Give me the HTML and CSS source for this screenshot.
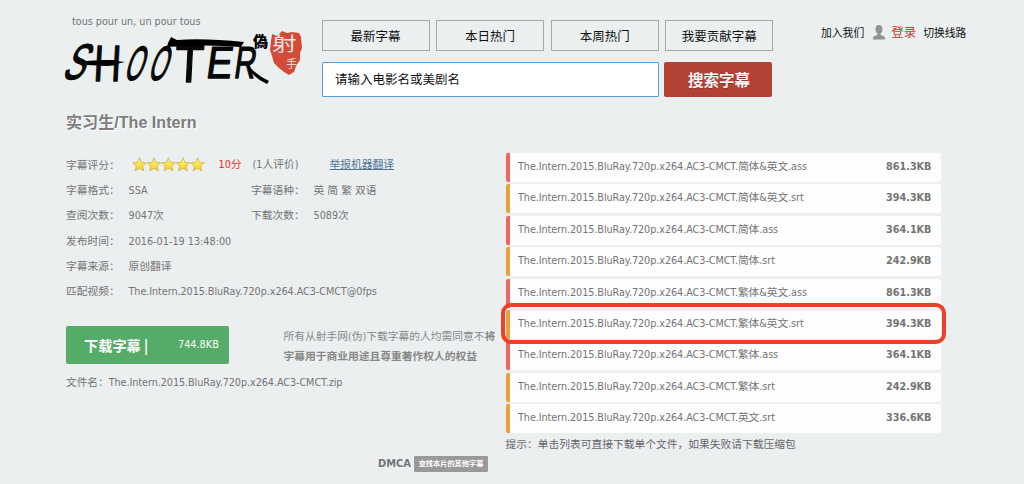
FILE: index.html
```html
<!DOCTYPE html>
<html lang="zh-CN">
<head>
<meta charset="utf-8">
<title>实习生/The Intern</title>
<link rel="stylesheet" href="styles.css">
</head>
<body>
<header class="header">
  <div class="brand">
    <p class="tagline">tous pour un, un pour tous</p>
    <svg class="logo" width="246" height="62" viewBox="0 0 246 62" role="img" aria-label="SHOOTER">
      <g class="brush">
        <text transform="translate(1 49) skewX(-24) scale(.64 1)" font-size="50">S</text>
        <text transform="translate(33 51) skewX(-3) scale(.74 1)" font-size="51">H</text>
        <text transform="translate(63 50) skewX(-18) scale(.48 1)" font-size="48">O</text>
        <text transform="translate(87 50) skewX(-18) scale(.48 1)" font-size="48">O</text>
        <text transform="translate(114 52) skewX(-3) scale(.9 1)" font-size="53">T</text>
        <text transform="translate(145 48) skewX(-8) scale(.86 1)" font-size="45">E</text>
        <text transform="translate(173 48) skewX(-8) scale(.66 1)" font-size="45">R</text>
      </g>
      <path d="M108 13 111 7 117 10 Q145 8 184 12L181 17 Q146 14 107 17Z"/>
      <path d="M26 31 Q46 29 65 32L48 36 27 35Z"/>
      <path d="M187 34Q196 45 209 51L207 54Q195 49 187 37Z"/>
      <text class="fake" x="193" y="17" font-size="15">偽</text>
      <path class="seal" d="M212 4 217 6 222 1 227 3 232 2 239 3 241 7 242 18 240 23 240 30 236 36 234 42 229 45 224 42 219 38 214 33 212 26 210 20 211 11Z"/>
      <text class="seal-text" transform="translate(212 21) scale(1.300 1)" font-size="19">射</text>
      <text class="seal-text" x="226" y="38" font-size="11">手</text>
    </svg>
  </div>
  <div class="center">
    <nav class="nav"><a>最新字幕</a><a>本日热门</a><a>本周热门</a><a>我要贡献字幕</a></nav>
    <form class="search"><div class="field">请输入电影名或美剧名</div><button type="button">搜索字幕</button></form>
  </div>
  <div class="user">
    <span>加入我们</span>
    <svg width="12" height="15" viewBox="0 0 12 15"><path d="M6 0C3.500 0 2.500 1.800 2.500 4c0 2 .7 3.700 1.900 4.600v1.300L1 11.300Q0 11.800 0 13v1.500h12V13q0-1.200-1-1.700L7.600 9.900V8.600C8.800 7.700 9.500 6 9.500 4 9.500 1.800 8.500 0 6 0Z"/></svg>
    <span class="login">登录</span>
    <span>切换线路</span>
  </div>
</header>
<h1 class="title">实习生/The Intern</h1>
<main class="main">
  <section class="info">
    <svg class="defs" width="0" height="0"><defs>
      <linearGradient id="gold" x1="0" y1="0" x2="0" y2="1"><stop offset="0" stop-color="#fff98a"/><stop offset="1" stop-color="#f2cf19"/></linearGradient>
      <path id="star" d="M7.500.8 9.500 5.300 14.300 5.800 10.700 9 11.800 13.800 7.500 11.300 3.200 13.800 4.300 9 .7 5.800 5.500 5.300Z"/>
    </defs></svg>
    <dl class="details">
      <dt>字幕评分：</dt>
      <dd class="rating">
        <svg class="stars" width="74" height="15" viewBox="0 0 74 15"><use href="#star"/><use href="#star" x="14.500"/><use href="#star" x="29"/><use href="#star" x="43.500"/><use href="#star" x="58"/></svg>
        <span class="score">10分</span><span class="votes">(1人评价)</span><a class="report">举报机器翻译</a>
      </dd>
      <dt>字幕格式：</dt><dd>SSA</dd><dt>字幕语种：</dt><dd>英 简 繁 双语</dd>
      <dt>查阅次数：</dt><dd>9047次</dd><dt>下载次数：</dt><dd>5089次</dd>
      <dt>发布时间：</dt><dd class="wide">2016-01-19 13:48:00</dd>
      <dt>字幕来源：</dt><dd class="wide">原创翻译</dd>
      <dt>匹配视频：</dt><dd class="wide file">The.Intern.2015.BluRay.720p.x264.AC3-CMCT@0fps</dd>
    </dl>
    <div class="download-row">
      <a class="download"><b>下载字幕 |</b><span>744.8KB</span></a>
      <p class="terms">所有从射手网(伪)下载字幕的人均需同意不<b>将</b><br><b>字幕用于商业用途且尊重著作权人的权益</b></p>
    </div>
    <p class="filename file">文件名：The.Intern.2015.BluRay.720p.x264.AC3-CMCT.zip</p>
  </section>
  <section class="files">
    <ul class="list">
      <li class="ass"><span>The.Intern.2015.BluRay.720p.x264.AC3-CMCT.简体&amp;英文.ass</span><b>861.3KB</b></li>
      <li class="srt"><span>The.Intern.2015.BluRay.720p.x264.AC3-CMCT.简体&amp;英文.srt</span><b>394.3KB</b></li>
      <li class="ass"><span>The.Intern.2015.BluRay.720p.x264.AC3-CMCT.简体.ass</span><b>364.1KB</b></li>
      <li class="srt"><span>The.Intern.2015.BluRay.720p.x264.AC3-CMCT.简体.srt</span><b>242.9KB</b></li>
      <li class="ass"><span>The.Intern.2015.BluRay.720p.x264.AC3-CMCT.繁体&amp;英文.ass</span><b>861.3KB</b></li>
      <li class="srt marked"><span>The.Intern.2015.BluRay.720p.x264.AC3-CMCT.繁体&amp;英文.srt</span><b>394.3KB</b></li>
      <li class="ass"><span>The.Intern.2015.BluRay.720p.x264.AC3-CMCT.繁体.ass</span><b>364.1KB</b></li>
      <li class="srt"><span>The.Intern.2015.BluRay.720p.x264.AC3-CMCT.繁体.srt</span><b>242.9KB</b></li>
      <li class="srt"><span>The.Intern.2015.BluRay.720p.x264.AC3-CMCT.英文.srt</span><b>336.6KB</b></li>
    </ul>
    <p class="hint">提示：单击列表可直接下载单个文件，如果失败请下载压缩包</p>
  </section>
</main>
<footer class="footer"><b>DMCA</b><a>查找本片的其他字幕</a></footer>
</body>
</html>
```

FILE: styles.css
```css
* { box-sizing: border-box; }
body {
  margin: 0;
  width: 1024px;
  height: 484px;
  overflow: hidden;
  background: #ebeff0;
  color: #747474;
  font-family: "DejaVu Sans Condensed", "DejaVu Sans", "Noto Sans CJK SC", sans-serif;
  font-stretch: condensed;
  font-size: 10.750px;
  line-height: 16px;
}
p, h1, ul, dl, dd { margin: 0; padding: 0; }

.header { display: flex; height: 108px; padding-left: 60px; }
.brand { width: 261.500px; padding-top: 14px; }
.tagline { padding-left: 12px; letter-spacing: -.02px; }
.logo { display: block; overflow: visible; }
.brush { font-family: "Liberation Sans", sans-serif; font-style: normal; fill: #080808; stroke: #080808; stroke-width: 1.300px; stroke-linejoin: round; }
.fake { font-family: "Noto Sans CJK TC", sans-serif; font-weight: 900; }
.seal { fill: #d34a38; }
.seal-text { font-family: "Noto Sans CJK SC", sans-serif; fill: #f2e8e6; }

.center { width: 451px; padding-top: 20px; font-family: "Noto Sans CJK SC", sans-serif; color: #111; }
.nav { display: grid; grid-template-columns: repeat(4, 108px); gap: 6.600px; }
.nav a { height: 31px; border: 1px solid #a0abaa; line-height: 29px; text-align: center; font-size: 12.500px; }
.search { display: flex; gap: 5px; margin-top: 11px; }
.field { width: 337.500px; height: 35px; border: 1px solid #559ddb; border-radius: 1px; background: #fff; padding-left: 12.500px; line-height: 32px; font-size: 12.500px; }
.search button { width: 108px; height: 35px; border: 0; border-radius: 2px; padding: 0 0 0 2px; background: #b24334; color: #fff; font: 500 15.500px/35px "Noto Sans CJK SC", sans-serif; -webkit-text-stroke: .2px #fff; text-shadow: 0 1px 1px #8a3026; }

.user { display: flex; align-items: center; height: 16px; margin: 24px 0 0 48.500px; font-family: "Noto Sans CJK SC", sans-serif; font-size: 10.800px; color: #111; }
.user svg { fill: #929292; margin: 0 6px 0 9px; }
.user .login { font-size: 12.500px; color: #c53c31; margin-right: 7px; }

.title { height: 45px; padding: 4px 0 0 66px; font: bold 16.100px/20px "Liberation Sans", "Noto Sans CJK SC", sans-serif; color: #7d7d7d; text-shadow: 1px 1px 0 #fff; }
.main { display: flex; height: 301px; padding-left: 66px; }
.info { width: 439.500px; }
.defs { display: block; }
.stars { fill: url(#gold); stroke: #c9aa3a; stroke-width: .7px; margin-top: -2px; }
.details { display: grid; grid-template-columns: 62.500px 122.500px 62.500px 1fr; grid-auto-rows: 25.200px; line-height: 26.500px; white-space: nowrap; }
.wide, .rating { grid-column: 2 / -1; }
.rating { display: flex; align-items: center; padding-left: 3px; }
.score { color: #f02d23; margin-left: 13px; }
.votes { margin-left: 11px; }
.report { margin-left: 31px; color: #4d7496; text-decoration: underline; }
.file { letter-spacing: -.07px; }
.download-row { display: flex; margin-top: 22px; }
.download { display: flex; align-items: center; width: 162.500px; height: 38px; border-radius: 2px; background: #55ab68; color: #fff; padding-left: 18px; }
.download b { width: 94px; font-size: 14.200px; font-weight: 700; font-family: "Noto Sans CJK SC", sans-serif; }
.download span { font-size: 10.800px; }
.terms { margin-left: 55px; padding-top: 1px; line-height: 18.600px; white-space: nowrap; color: #888; }
.terms b { font-weight: 700; font-family: "Noto Sans CJK SC", sans-serif; }
.filename { margin-top: 9px; white-space: nowrap; }

.files { width: 435px; }
.list { display: grid; gap: 2.400px; list-style: none; }
.list li { position: relative; display: flex; justify-content: space-between; height: 29px; border-left: 4px solid; border-radius: 2px; background: #fdfdfd; padding: 0 9px; line-height: 27px; white-space: nowrap; }
.list span, .list b { color: #747474; }
.list span { letter-spacing: -.07px; margin-left: -.5px; }
.list .ass { border-color: #ef6661; }
.list .srt { border-color: #e8a13c; }
.marked { z-index: 1; }
.marked::after { content: ""; position: absolute; inset: -7px -5px -5px -9px; border: 4px solid #ec4027; border-radius: 10px; }
.hint { margin-top: 3px; color: #666; font-family: "Noto Sans CJK SC", sans-serif; }
.footer { display: flex; align-items: center; gap: 3px; height: 18px; margin-top: 1px; padding-left: 378px; font-size: 11px; }
.footer a { height: 16px; width: 74px; border-radius: 1px; background: #999; color: #fff; font: 700 7.200px/15px "Noto Sans CJK SC", sans-serif; text-align: center; white-space: nowrap; }
```
